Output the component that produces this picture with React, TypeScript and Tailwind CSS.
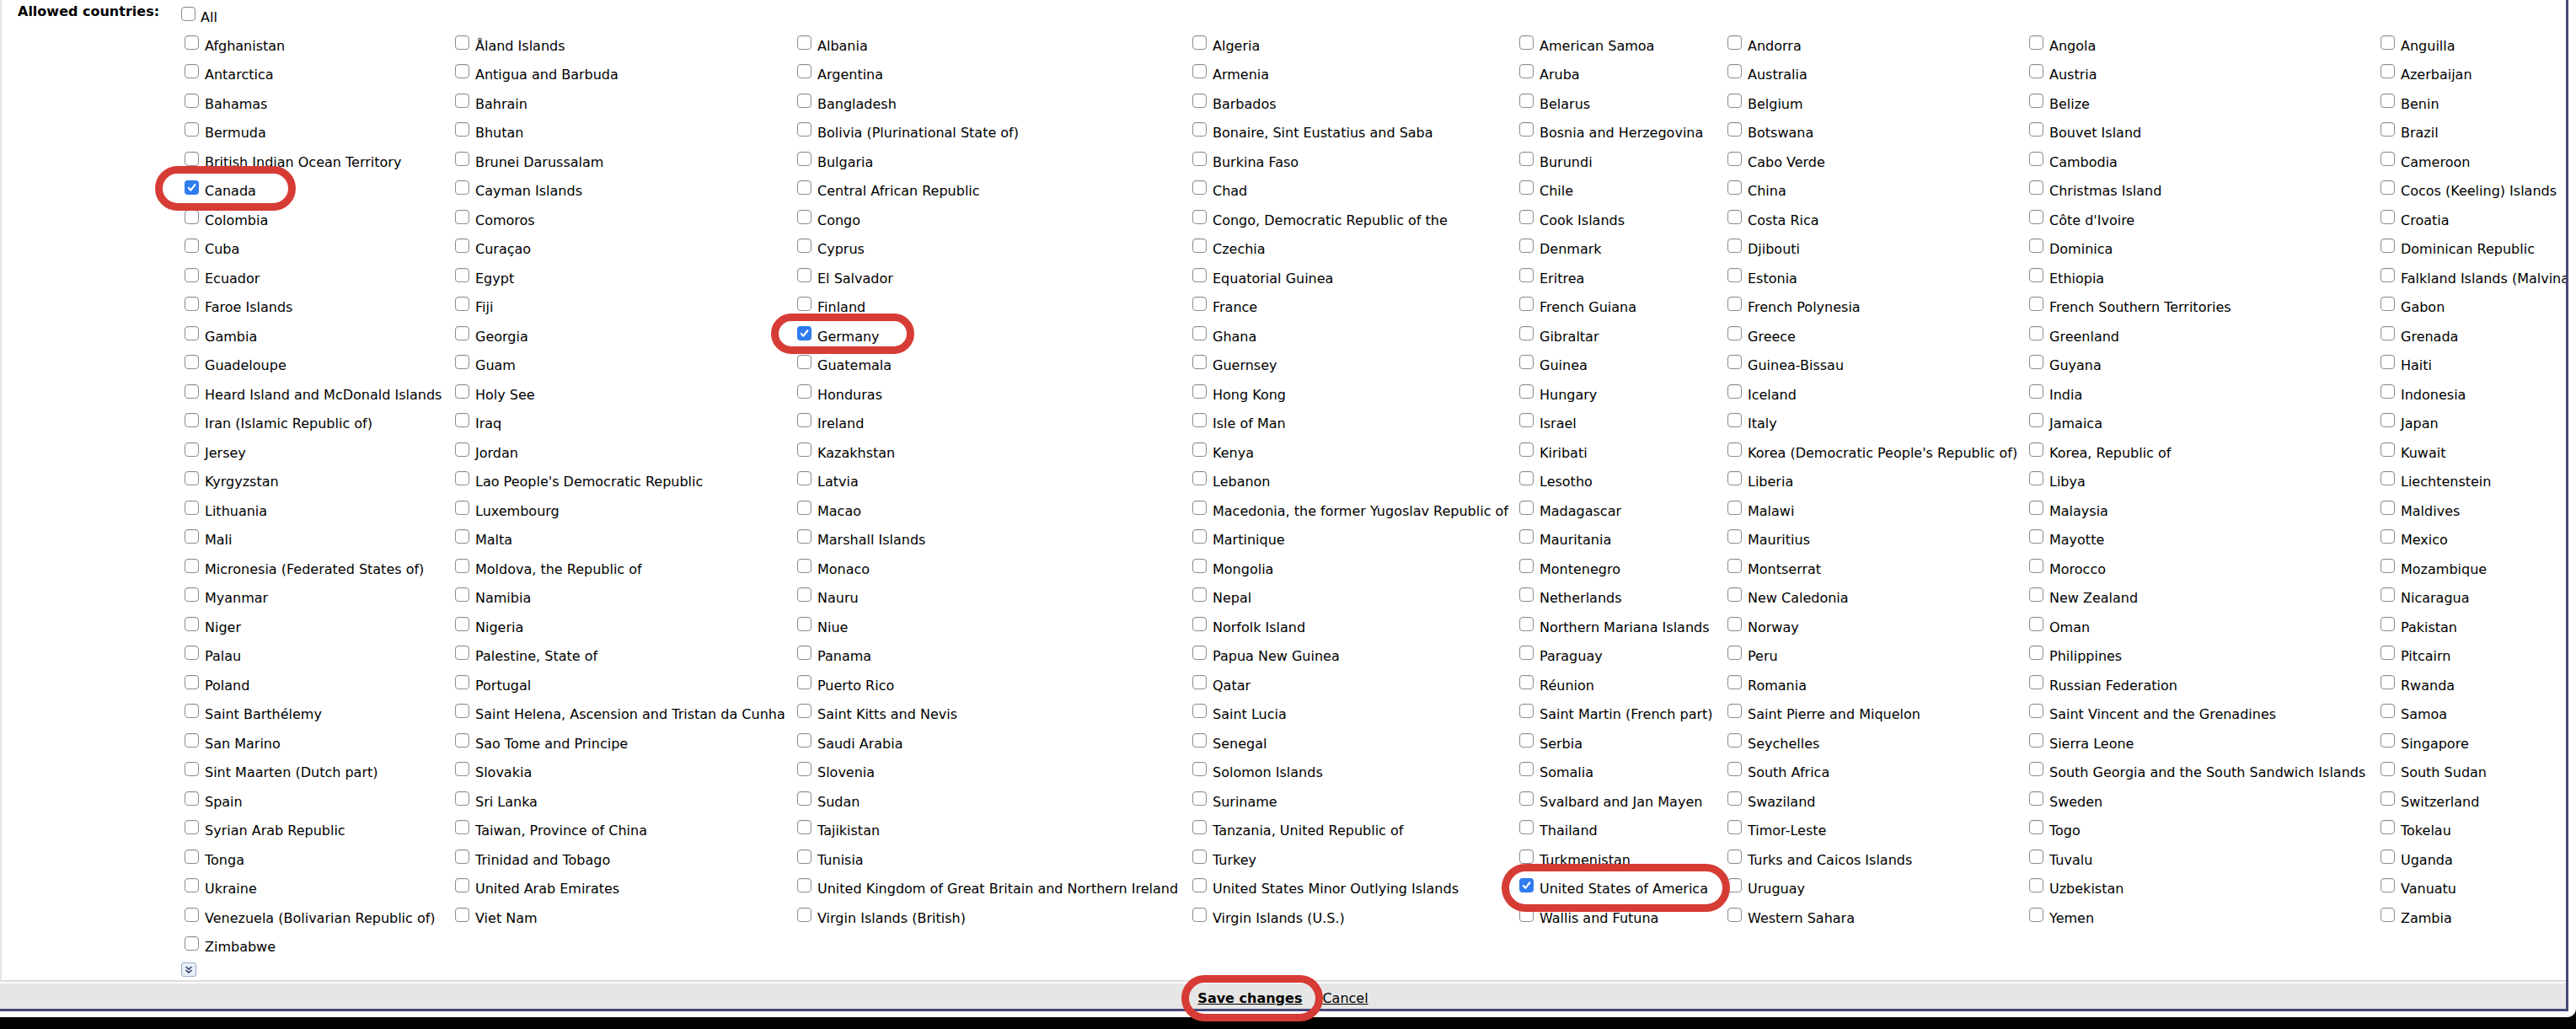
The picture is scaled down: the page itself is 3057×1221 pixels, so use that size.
import React from "react";

const countries = [
  "Afghanistan", "Åland Islands", "Albania", "Algeria", "American Samoa", "Andorra", "Angola", "Anguilla",
  "Antarctica", "Antigua and Barbuda", "Argentina", "Armenia", "Aruba", "Australia", "Austria", "Azerbaijan",
  "Bahamas", "Bahrain", "Bangladesh", "Barbados", "Belarus", "Belgium", "Belize", "Benin",
  "Bermuda", "Bhutan", "Bolivia (Plurinational State of)", "Bonaire, Sint Eustatius and Saba", "Bosnia and Herzegovina", "Botswana", "Bouvet Island", "Brazil",
  "British Indian Ocean Territory", "Brunei Darussalam", "Bulgaria", "Burkina Faso", "Burundi", "Cabo Verde", "Cambodia", "Cameroon",
  "Canada", "Cayman Islands", "Central African Republic", "Chad", "Chile", "China", "Christmas Island", "Cocos (Keeling) Islands",
  "Colombia", "Comoros", "Congo", "Congo, Democratic Republic of the", "Cook Islands", "Costa Rica", "Côte d'Ivoire", "Croatia",
  "Cuba", "Curaçao", "Cyprus", "Czechia", "Denmark", "Djibouti", "Dominica", "Dominican Republic",
  "Ecuador", "Egypt", "El Salvador", "Equatorial Guinea", "Eritrea", "Estonia", "Ethiopia", "Falkland Islands (Malvinas)",
  "Faroe Islands", "Fiji", "Finland", "France", "French Guiana", "French Polynesia", "French Southern Territories", "Gabon",
  "Gambia", "Georgia", "Germany", "Ghana", "Gibraltar", "Greece", "Greenland", "Grenada",
  "Guadeloupe", "Guam", "Guatemala", "Guernsey", "Guinea", "Guinea-Bissau", "Guyana", "Haiti",
  "Heard Island and McDonald Islands", "Holy See", "Honduras", "Hong Kong", "Hungary", "Iceland", "India", "Indonesia",
  "Iran (Islamic Republic of)", "Iraq", "Ireland", "Isle of Man", "Israel", "Italy", "Jamaica", "Japan",
  "Jersey", "Jordan", "Kazakhstan", "Kenya", "Kiribati", "Korea (Democratic People's Republic of)", "Korea, Republic of", "Kuwait",
  "Kyrgyzstan", "Lao People's Democratic Republic", "Latvia", "Lebanon", "Lesotho", "Liberia", "Libya", "Liechtenstein",
  "Lithuania", "Luxembourg", "Macao", "Macedonia, the former Yugoslav Republic of", "Madagascar", "Malawi", "Malaysia", "Maldives",
  "Mali", "Malta", "Marshall Islands", "Martinique", "Mauritania", "Mauritius", "Mayotte", "Mexico",
  "Micronesia (Federated States of)", "Moldova, the Republic of", "Monaco", "Mongolia", "Montenegro", "Montserrat", "Morocco", "Mozambique",
  "Myanmar", "Namibia", "Nauru", "Nepal", "Netherlands", "New Caledonia", "New Zealand", "Nicaragua",
  "Niger", "Nigeria", "Niue", "Norfolk Island", "Northern Mariana Islands", "Norway", "Oman", "Pakistan",
  "Palau", "Palestine, State of", "Panama", "Papua New Guinea", "Paraguay", "Peru", "Philippines", "Pitcairn",
  "Poland", "Portugal", "Puerto Rico", "Qatar", "Réunion", "Romania", "Russian Federation", "Rwanda",
  "Saint Barthélemy", "Saint Helena, Ascension and Tristan da Cunha", "Saint Kitts and Nevis", "Saint Lucia", "Saint Martin (French part)", "Saint Pierre and Miquelon", "Saint Vincent and the Grenadines", "Samoa",
  "San Marino", "Sao Tome and Principe", "Saudi Arabia", "Senegal", "Serbia", "Seychelles", "Sierra Leone", "Singapore",
  "Sint Maarten (Dutch part)", "Slovakia", "Slovenia", "Solomon Islands", "Somalia", "South Africa", "South Georgia and the South Sandwich Islands", "South Sudan",
  "Spain", "Sri Lanka", "Sudan", "Suriname", "Svalbard and Jan Mayen", "Swaziland", "Sweden", "Switzerland",
  "Syrian Arab Republic", "Taiwan, Province of China", "Tajikistan", "Tanzania, United Republic of", "Thailand", "Timor-Leste", "Togo", "Tokelau",
  "Tonga", "Trinidad and Tobago", "Tunisia", "Turkey", "Turkmenistan", "Turks and Caicos Islands", "Tuvalu", "Uganda",
  "Ukraine", "United Arab Emirates", "United Kingdom of Great Britain and Northern Ireland", "United States Minor Outlying Islands", "United States of America", "Uruguay", "Uzbekistan", "Vanuatu",
  "Venezuela (Bolivarian Republic of)", "Viet Nam", "Virgin Islands (British)", "Virgin Islands (U.S.)", "Wallis and Futuna", "Western Sahara", "Yemen", "Zambia",
  "Zimbabwe",
];

const checked = new Set(["Canada", "Germany", "United States of America"]);

function Box({ on }: { on?: boolean }) {
  if (on) {
    return (
      <span className="flex h-[17px] w-[17px] shrink-0 items-center justify-center rounded-[4px] bg-[#2f7bf0]">
        <svg viewBox="0 0 12 12" className="h-[13px] w-[13px]">
          <path d="M2.6 6.4 L5 8.9 L9.6 3" stroke="white" strokeWidth="2" fill="none" strokeLinecap="round" strokeLinejoin="round" />
        </svg>
      </span>
    );
  }
  return <span className="h-[17px] w-[17px] shrink-0 rounded-[4px] border border-[#8d8d8d] bg-white shadow-[inset_0_1px_1px_rgba(0,0,0,0.08)]" />;
}

function Ring({ className }: { className: string }) {
  return <div className={"pointer-events-none absolute rounded-full border-[9px] border-[#d63c35] " + className} />;
}

export default function App() {
  return (
    <div className="relative h-[1221px] w-[3057px] overflow-hidden bg-black font-['DejaVu_Sans','Verdana',sans-serif] text-[16px] text-black">
      <div className="h-[1207px] rounded-br-[10px] bg-white">
        <div className="h-[1200px] w-[3048px] overflow-hidden border-r-[3px] border-b-[3px] border-[#474778]">
          <div className="flex h-[1165px] border-b-2 border-l-2 border-b-[#dcdcdc] border-l-[#e6e6e6]">
            <div className="w-[213px] shrink-0 pt-[4px] pl-[19px] font-bold leading-[19px]">Allowed countries:</div>
            <div className="min-w-0 flex-1">
              <label className="flex h-[33px] items-center gap-[6px] whitespace-nowrap">
                <Box />
                <span className="pt-[8px]">All</span>
              </label>
              <div className="ml-[4px] grid auto-rows-[34.5px] grid-cols-[321px_406px_469px_388px_247px_358px_417px_max-content]">
                {countries.map((c) => (
                  <label key={c} className="flex items-center gap-[7px] whitespace-nowrap">
                    <Box on={checked.has(c)} />
                    <span className="pt-[9px]">{c}</span>
                  </label>
                ))}
              </div>
              <div className="mt-[5px] flex h-[17px] w-[18px] items-center justify-center rounded-[3px] border border-[#9aaac4] bg-[#e9eff8]">
                <svg viewBox="0 0 12 12" className="h-[12px] w-[12px]">
                  <path d="M3 2.5 L6 5.2 L9 2.5 M3 6.5 L6 9.2 L9 6.5" stroke="#2d3e66" strokeWidth="1.6" fill="none" strokeLinecap="round" strokeLinejoin="round" />
                </svg>
              </div>
            </div>
          </div>
          <div className="mt-[2px] flex h-[30px] justify-center gap-[24px] bg-[#e6e6e6] pt-[8px] leading-[19px]">
            <span className="font-bold underline">Save changes</span>
            <span className="underline">Cancel</span>
          </div>
        </div>
      </div>
      <Ring className="left-[184px] top-[197px] h-[53px] w-[167px]" />
      <Ring className="left-[915px] top-[372px] h-[48px] w-[170px]" />
      <Ring className="left-[1782px] top-[1025px] h-[57px] w-[271px]" />
      <Ring className="left-[1402px] top-[1157px] h-[55px] w-[168px]" />
    </div>
  );
}
